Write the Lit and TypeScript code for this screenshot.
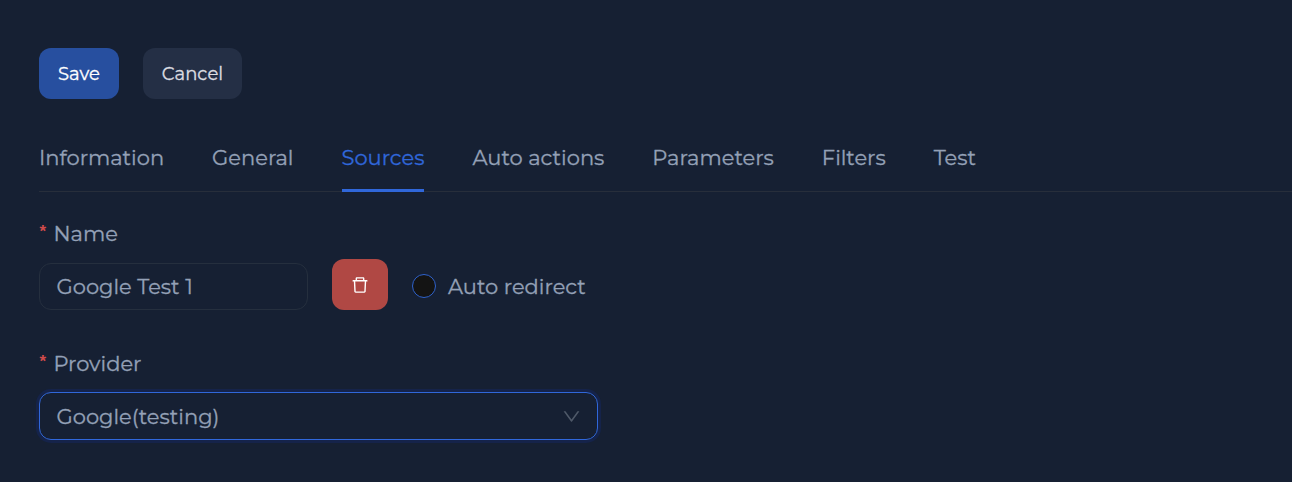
import { LitElement, html, css } from "lit";
import { customElement, state } from "lit/decorators.js";
import { classMap } from "lit/directives/class-map.js";

const TABS = ["Information", "General", "Sources", "Auto actions", "Parameters", "Filters", "Test"];

@customElement("app-root")
export class AppRoot extends LitElement {
  @state() private active = "Sources";

  static styles = css`
    :host {
      display: block;
      box-sizing: border-box;
      height: 482px;
      padding: 48px 0 0 39px;
      overflow: hidden;
      background: #162033;
      color: #94a1b7;
      font: 400 21px/32px Montserrat, Inter, sans-serif;
      -webkit-text-stroke: 0.3px currentColor;
      white-space: nowrap;
    }
    * { box-sizing: border-box; }
    .actions-bar { display: flex; gap: 24px; }
    button {
      display: flex;
      align-items: center;
      justify-content: center;
      border: 0;
      padding: 0;
      height: 51px;
      border-radius: 12px;
      color: #fff;
      font: 400 18px/28px Montserrat, Inter, sans-serif;
      letter-spacing: 0.05px;
    }
    .save { width: 80px; background: #274f9f; }
    .cancel { width: 99px; background: #242f45; color: #dcdee2; }
    .tabs {
      display: flex;
      gap: 48px;
      height: 50px;
      margin-top: 43px;
      border-bottom: 1px solid #272e3b;
    }
    .tab { height: 50px; flex: none; }
    .tab.active { color: #3067da; border-bottom: 3px solid #3067da; }
    .label { display: flex; margin-top: 26px; }
    .required {
      width: 14.5px;
      height: 32px;
      padding-left: 0.5px;
      color: #d14b4b;
      font: bold 17px/27px "Liberation Sans", sans-serif;
      -webkit-text-stroke: 0;
    }
    .name-row { display: flex; gap: 24px; margin-top: 9px; height: 51px; }
    .field {
      display: flex;
      align-items: center;
      border: 1px solid #252f3e;
      border-radius: 12px;
      padding: 0 15px 0 16.5px;
    }
    .name-field { width: 269px; height: 47px; margin-top: 4px; }
    .delete { width: 56px; background: #b04844; }
    .check { display: flex; align-items: center; gap: 12px; height: 32px; margin-top: 11px; }
    .circle {
      width: 24px;
      height: 24px;
      border: 1px solid #2f62cc;
      border-radius: 50%;
      background: #141414;
    }
    .check-text { padding-top: 1px; }
    .provider { margin-top: 38px; }
    .select {
      justify-content: space-between;
      width: 559px;
      height: 48px;
      margin-top: 12px;
      border-color: #3067da;
      box-shadow: 0 0 0 3px #15234a;
    }
    .value { padding-top: 1px; }
    svg { display: block; flex: none; }
  `;

  render() {
    return html`
      <div class="actions-bar">
        <button class="save">Save</button>
        <button class="cancel">Cancel</button>
      </div>
      <nav class="tabs">
        ${TABS.map(
          (label) => html`<div
            class=${classMap({ tab: true, active: label === this.active })}
            @click=${() => (this.active = label)}
          >${label}</div>`
        )}
      </nav>
      <div class="label"><span class="required">*</span><span>Name</span></div>
      <div class="name-row">
        <div class="field name-field">Google Test 1</div>
        <button class="delete" aria-label="Delete">
          <svg width="20" height="20" viewBox="0 0 1024 1024" fill="currentColor">
            <path d="M360 184h-8c4.400 0 8-3.600 8-8v8h304v-8c0 4.400 3.600 8 8 8h-8v72h72v-80c0-35.300-28.700-64-64-64H352c-35.300 0-64 28.700-64 64v80h72v-72zm504 72H160c-17.700 0-32 14.300-32 32v32c0 4.400 3.600 8 8 8h60.400l24.700 523c1.600 34.100 29.800 61 63.900 61h454c34.200 0 62.300-26.800 63.900-61l24.700-523H888c4.400 0 8-3.600 8-8v-32c0-17.700-14.300-32-32-32zM731.300 840H292.700l-24.200-512h487l-24.200 512z"/>
          </svg>
        </button>
        <div class="check"><span class="circle"></span><span class="check-text">Auto redirect</span></div>
      </div>
      <div class="label provider"><span class="required">*</span><span>Provider</span></div>
      <div class="field select">
        <span class="value">Google(testing)</span>
        <svg width="21" height="21" viewBox="0 0 1024 1024" fill="#4f5969">
          <path d="M884 256h-75c-5.100 0-9.900 2.500-12.900 6.600L512 654.200 227.900 262.600c-3-4.100-7.800-6.600-12.900-6.600h-75c-6.500 0-10.300 7.400-6.500 12.700l352.600 486.100c12.800 17.600 39 17.600 51.700 0l352.600-486.100c3.900-5.300.1-12.700-6.400-12.700z"/>
        </svg>
      </div>
    `;
  }
}
